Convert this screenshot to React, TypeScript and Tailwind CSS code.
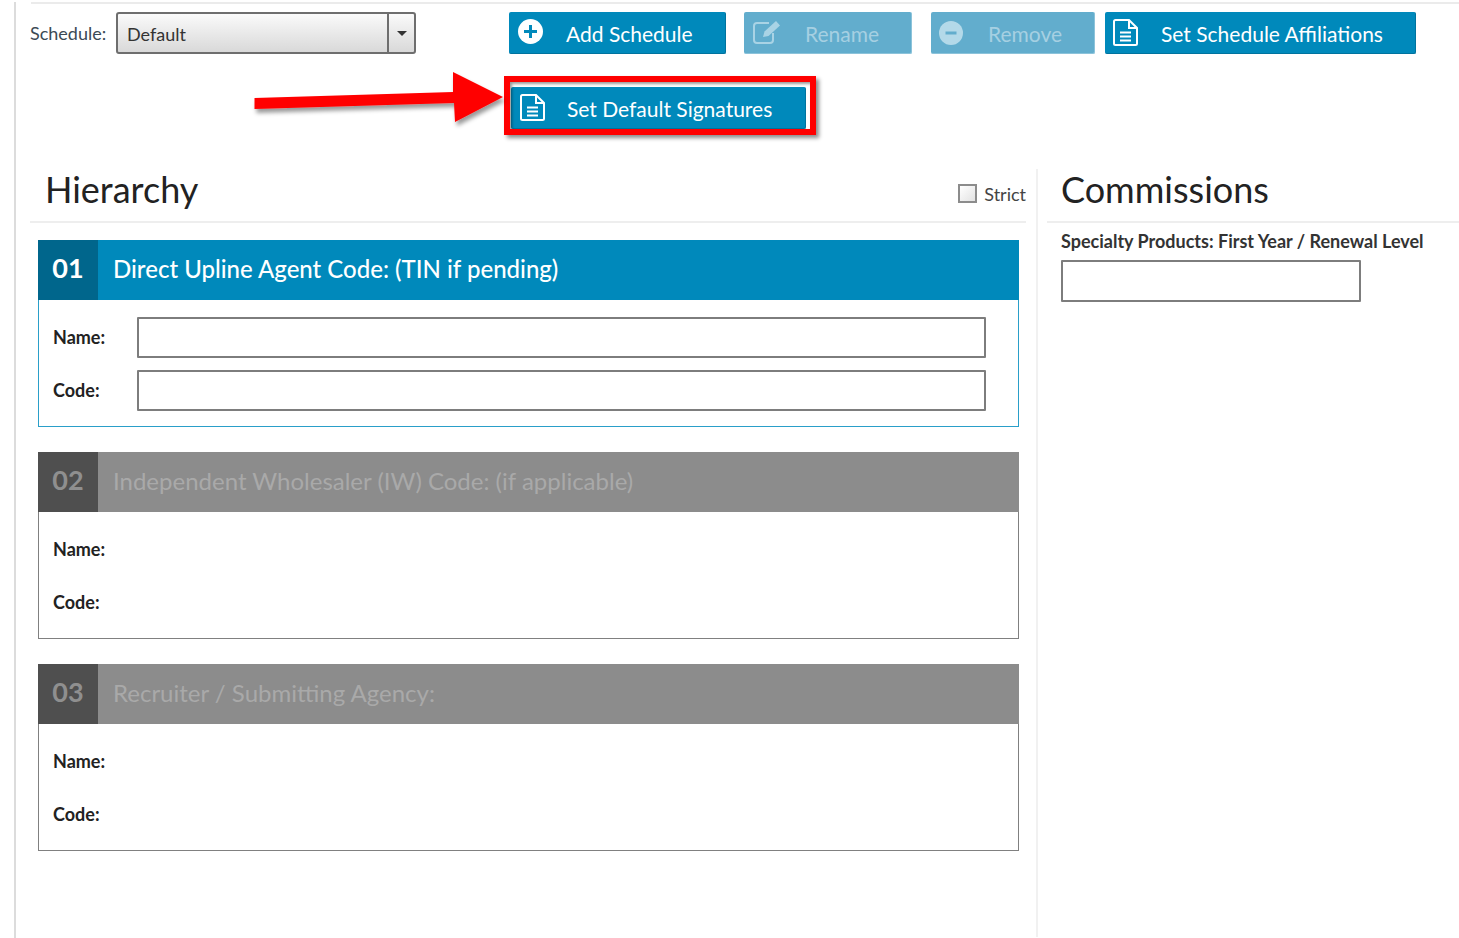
import { ReactNode } from 'react';

const lato = "font-['Lato','Liberation_Sans',sans-serif]";

function PlusIcon() {
  return (
    <svg width="25" height="25" viewBox="0 0 25 25">
      <circle cx="12.500" cy="12.500" r="12.500" fill="currentColor" />
      <path d="M12.500 6v13M6 12.500h13" stroke="#0089bb" strokeWidth="3" />
    </svg>
  );
}

function MinusIcon() {
  return (
    <svg width="24" height="24" viewBox="0 0 24 24">
      <circle cx="12" cy="12" r="12" fill="currentColor" />
      <path d="M6.500 12h11" stroke="#62adcd" strokeWidth="3" />
    </svg>
  );
}

function EditIcon() {
  return (
    <svg width="28" height="24" viewBox="0 0 28 24" fill="none" stroke="currentColor" strokeWidth="2">
      <path d="M16 3H4a3 3 0 0 0-3 3v14a3 3 0 0 0 3 3h13a3 3 0 0 0 3-3v-7" />
      <path d="M10 17l1.500-5.500L23 1l4 4.500L15.500 16z" fill="currentColor" stroke="none" />
    </svg>
  );
}

function DocIcon() {
  return (
    <svg width="25" height="27" viewBox="0 0 25 27" fill="none" stroke="currentColor" strokeWidth="2">
      <path d="M2.500 1H16l8 8v15.500a1.500 1.500 0 0 1-1.500 1.500h-20A1.500 1.500 0 0 1 1 24.500v-22A1.500 1.500 0 0 1 2.500 1z" />
      <path d="M16 1v8h8" />
      <path d="M7 13.500h11M7 17.500h11M7 21.500h11" />
    </svg>
  );
}

function ActionButton({ icon, label, className, textClass }: { icon: ReactNode; label: string; className: string; textClass: string }) {
  return (
    <button className={`h-[42px] flex items-center rounded-[2px] border-b border-r text-[21px] leading-none ${className}`}>
      {icon}
      <span className={textClass}>{label}</span>
    </button>
  );
}

function Field({ label, showInput }: { label: string; showInput: boolean }) {
  return (
    <div className="flex items-center h-[41px]">
      <span className="w-[84px] text-[18px] font-bold text-[#222]">{label}</span>
      {showInput && <input className="w-[849px] h-[41px] border-2 border-[#7d7d7d] rounded-[1px] bg-white" />}
    </div>
  );
}

function Panel({ num, title, active }: { num: string; title: string; active?: boolean }) {
  return (
    <div className={`w-[981px] h-[187px] border ${active ? 'border-[#2a9fc9]' : 'border-[#808080]'}`}>
      <div className={`-mx-px -mt-px h-[60px] flex items-center ${active ? 'bg-[#0089bb] text-white' : 'bg-[#8c8c8c] text-[#a9a9a9]'}`}>
        <div className={`w-[60px] h-full flex items-center justify-center pb-[3px] text-[27px] font-bold ${active ? 'bg-[#00668c]' : 'bg-[#4f4f4f] text-[#8f8f8f]'}`}>{num}</div>
        <div className={`pl-[15px] pb-[3px] text-[24px] ${active ? 'font-medium' : ''}`}>{title}</div>
      </div>
      <div className="pl-[14px] pt-[17px] flex flex-col gap-[12px]">
        <Field label="Name:" showInput={!!active} />
        <Field label="Code:" showInput={!!active} />
      </div>
    </div>
  );
}

export default function App() {
  return (
    <div className={`relative w-[1459px] h-[938px] overflow-hidden bg-white pl-[14px] ${lato}`}>
      <div className="h-full border-l-2 border-[#dcdcdc] pl-[14px]">
        <div className="h-[2px] mt-[2px] ml-[1px] bg-[#ebebeb]" />

        {/* toolbar */}
        <div className="flex items-start pt-[8px] h-[50px]">
          <span className="w-[86px] pt-[9px] text-[18px] leading-[24px] text-[#3c4a55]">Schedule:</span>
          <div className="w-[300px] h-[42px] flex items-stretch border-2 border-[#6e6e6e] rounded-[3px] bg-gradient-to-b from-[#fafafa] to-[#d9d9d9]">
            <span className="flex-1 pl-[9px] pt-[1px] text-[18px] leading-[38px] text-[#333] border-r-2 border-[#6e6e6e]">Default</span>
            <span className="w-[25px] flex items-center justify-center">
              <span className="w-0 h-0 border-x-[5px] border-x-transparent border-t-[5px] border-t-[#333]" />
            </span>
          </div>
          <ActionButton
            icon={<span className="ml-[9px] -mt-[2px] text-white"><PlusIcon /></span>}
            label="Add Schedule"
            textClass="ml-[23px] pt-[1px]"
            className="ml-[93px] w-[217px] bg-[#0089bb] border-[#00739e] text-white"
          />
          <ActionButton
            icon={<span className="ml-[9px] -mt-[2px] text-[#a9d3e5]"><EditIcon /></span>}
            label="Rename"
            textClass="ml-[24px] pt-[1px]"
            className="ml-[18px] w-[168px] bg-[#62adcd] border-[#8cc3da] text-[#a6d0e2]"
          />
          <ActionButton
            icon={<span className="ml-[8px] text-[#b3d9e9]"><MinusIcon /></span>}
            label="Remove"
            textClass="ml-[25px] pt-[1px]"
            className="ml-[19px] w-[164px] bg-[#62adcd] border-[#8cc3da] text-[#a6d0e2]"
          />
          <ActionButton
            icon={<span className="ml-[8px] -mt-[1px] text-white"><DocIcon /></span>}
            label="Set Schedule Affiliations"
            textClass="ml-[23px] pt-[1px]"
            className="ml-[10px] w-[311px] bg-[#0089bb] border-[#00739e] text-white"
          />
        </div>

        <div className="pl-[481px] pt-[33px] h-[115px]">
          <ActionButton
            icon={<span className="ml-[9px] text-white"><DocIcon /></span>}
            label="Set Default Signatures"
            textClass="ml-[22px] pt-[2px]"
            className="w-[295px] bg-[#0089bb] border-[#00739e] text-white"
          />
        </div>

        {/* two columns */}
        <div className="flex h-[768px]">
          <div className="w-[996px]">
            <div className="h-[54px] flex items-end justify-between border-b-2 border-[#eeeeee]">
              <h1 className="pl-[15px] pb-[10px] text-[36px] leading-[44px] text-[#222]">Hierarchy</h1>
              <label className="flex items-center pb-[15px] text-[18px] leading-[24px] text-[#444]">
                <span className="w-[19px] h-[19px] mr-[7px] -mt-[2px] border-2 border-[#8c8c8c] bg-gradient-to-br from-white to-[#e2e2e2]" />
                Strict
              </label>
            </div>
            <div className="pl-[8px] pt-[17px] flex flex-col gap-[25px]">
              <Panel num="01" title="Direct Upline Agent Code: (TIN if pending)" active />
              <Panel num="02" title="Independent Wholesaler (IW) Code: (if applicable)" />
              <Panel num="03" title="Recruiter / Submitting Agency:" />
            </div>
          </div>
          <div className="ml-[10px] w-[2px] bg-[#f1f1f1]" />
          <div className="ml-[9px] flex-1">
            <div className="h-[54px] flex items-end border-b-2 border-[#eeeeee]">
              <h2 className="pl-[14px] pb-[10px] text-[36px] leading-[44px] text-[#222]">Commissions</h2>
            </div>
            <div className="pl-[14px] pt-[6px]">
              <div className="text-[18px] leading-[24px] font-bold text-[#333]">Specialty Products: First Year / Renewal Level</div>
              <input className="mt-[7px] block w-[300px] h-[42px] border-2 border-[#7d7d7d] rounded-[1px] bg-white" />
            </div>
          </div>
        </div>
      </div>

      {/* red annotation over the page */}
      <div className="absolute left-[504px] top-[76px] w-[312px] h-[59px] border-[6px] border-[#ff0000] shadow-[3px_3px_4px_rgba(0,0,0,0.45),inset_2px_2px_3px_rgba(0,0,0,0.4)]" />
      <svg className="absolute left-[250px] top-[68px]" width="260" height="64" viewBox="0 0 260 64">
        <defs>
          <filter id="arrow-shadow" x="-5%" y="-20%" width="110%" height="150%">
            <feDropShadow dx="2" dy="4" stdDeviation="2" floodColor="#000" floodOpacity="0.4" />
          </filter>
        </defs>
        <path d="M4.500 30 203 24 203 4 253 29 205 54 204 35 4.500 41z" fill="#ff0000" filter="url(#arrow-shadow)" />
      </svg>
    </div>
  );
}
